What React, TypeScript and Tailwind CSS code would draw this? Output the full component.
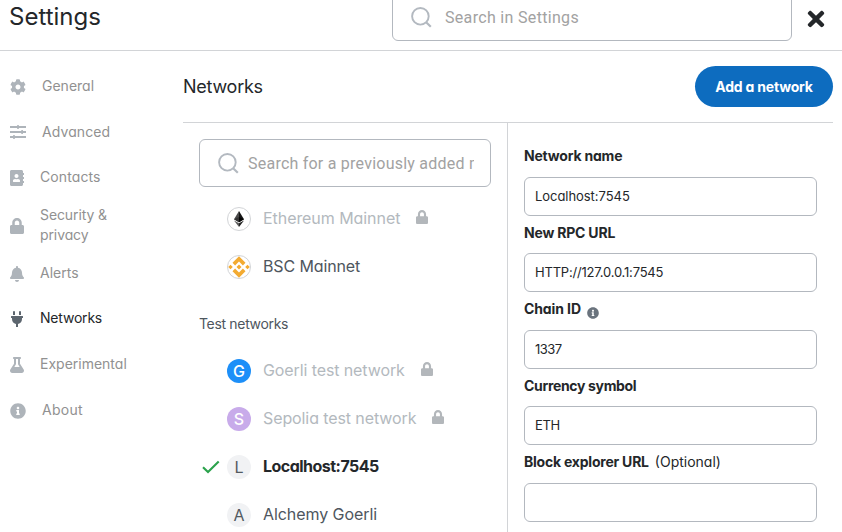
import type { ReactNode } from 'react';
import { FaAddressBook, FaBell, FaCog, FaFlask, FaInfoCircle, FaLock, FaPlug, FaTimes } from 'react-icons/fa';

function SearchIcon() {
  return (
    <svg viewBox="0 0 21 21" className="h-[21px] w-[21px] shrink-0 text-[#b3b9c0]" fill="none" stroke="currentColor" strokeWidth="1.9">
      <circle cx="9.4" cy="9.3" r="8.3" />
      <path d="M15.1 15.2L19.800 19.800" strokeWidth="2.2" />
    </svg>
  );
}

function SlidersIcon() {
  return (
    <svg viewBox="0 0 16 16" className="h-4 w-4" fill="currentColor">
      <path d="M0 1.100h16v1.900H0zM7.200 .1h1.600v4H7.200zM0 6.100h16v1.900H0zM11.300 5.100h1.600v4h-1.600zM0 11.100h16v1.900H0zM3.200 10.100h1.600v4H3.200z" />
    </svg>
  );
}

function EthereumIcon() {
  return (
    <svg viewBox="0 0 10 16" className="h-4 w-2.5">
      <path d="M5 0L0 8.2l5 3z" fill="#4a4a4a" />
      <path d="M5 0l5 8.2-5 3z" fill="#151515" />
      <path d="M5 6L0 8.2l5 3z" fill="#333" />
      <path d="M5 6l5 2.2-5 3z" fill="#050505" />
      <path d="M0 9.4L5 16v-3.7z" fill="#5a5a5a" />
      <path d="M10 9.4L5 16v-3.7z" fill="#222" />
    </svg>
  );
}

function BscIcon() {
  return (
    <svg viewBox="0 0 22 22" className="h-[22px] w-[22px]" fill="#f3ab32">
      <path d="M11 .3L4.5 6.8l2.6 2.6L11 5.500l3.900 3.900 2.600-2.600z" />
      <path d="M11 21.700L4.500 15.200l2.600-2.600L11 16.500l3.900-3.900 2.600 2.600z" />
      <path d="M11 8.500L13.500 11 11 13.500 8.500 11zM2.500 8.700L4.800 11l-2.300 2.300L.2 11zM19.500 8.700l2.300 2.300-2.300 2.300-2.300-2.300z" />
    </svg>
  );
}

function NavItem({ icon, label, height, active }: { icon: ReactNode; label: ReactNode; height: string; active?: boolean }) {
  return (
    <div className={`flex items-center gap-4 ${height} ${active ? 'text-[#24272a]' : 'text-[#919191]'}`}>
      <span className={`mt-[2px] flex shrink-0 justify-center ${active ? 'text-[#5d666f]' : 'text-[#aeb4ba]'}`}>{icon}</span>
      <span className="text-[14px] leading-5">{label}</span>
    </div>
  );
}

function NetworkRow({ icon, circle, name, nameClass, locked, selected }: { icon: ReactNode; circle: string; name: string; nameClass: string; locked?: boolean; selected?: boolean }) {
  return (
    <div className="flex h-12 items-center">
      <span className="flex w-7 shrink-0 pl-[3px]">
        {selected && (
          <svg viewBox="0 0 18 14" className="h-3.5 w-[18px]" fill="none" stroke="#2ba24c" strokeWidth="2.1">
            <path d="M1 7.200L6 12 16.700 1.500" />
          </svg>
        )}
      </span>
      <span className={`flex h-6 w-6 shrink-0 items-center justify-center rounded-full text-[16px] leading-none ${circle}`}>{icon}</span>
      <span className={`mb-0.5 ml-3 whitespace-nowrap text-[16px] leading-6 ${nameClass}`}>{name}</span>
      {locked && <FaLock className="mb-[4px] ml-4 h-3.5 w-3 text-[#b3b7bb]" preserveAspectRatio="none" />}
    </div>
  );
}

function Field({ label, labelClass, extra, value, valueClass }: { label: string; labelClass: string; extra?: ReactNode; value: string; valueClass?: string }) {
  return (
    <div className="h-[76.4px]">
      <div className="flex h-[20px] items-center text-[14px] leading-5">
        <span className={`font-bold ${labelClass}`}>{label}</span>
        {extra}
      </div>
      <div className={`mt-[10.6px] flex h-[39px] items-center rounded-md border border-[#b3b8bf] px-2.5 text-[13px] ${valueClass ?? ''}`}>{value}</div>
    </div>
  );
}

export default function App() {
  return (
    <div className="h-[532px] w-[842px] overflow-hidden bg-white font-[Inter,sans-serif] text-[#24272a] [font-feature-settings:'cv11']">
      <header className="flex h-[51px] items-start overflow-hidden border-b border-[#d2d4d7] pl-[9px]">
        <h1 className="w-[383px] pt-px text-[24px] leading-8">Settings</h1>
        <div className="-mt-[7px] flex h-12 w-[400px] items-center gap-[13px] rounded-md border border-[#b3b8bf] pl-[18px] font-[Roboto,sans-serif] text-[16px] text-[#a2a2a2]">
          <SearchIcon />
          <span className="pt-0.5 tracking-[0.32px]">Search in Settings</span>
        </div>
        <FaTimes className="ml-[14.5px] mt-[7px] h-6 w-[18px] text-[#24272a]" />
      </header>

      <div className="flex h-[481px]">
        <nav className="w-[183px] pl-[10px] pt-3">
          <NavItem icon={<FaCog className="h-4 w-4" />} label="General" height="h-[46px]" />
          <NavItem icon={<SlidersIcon />} label={<span className="tracking-[0.1px]">Advanced</span>} height="h-[46px]" />
          <NavItem icon={<FaAddressBook className="h-4 w-3.5" />} label={<span className="tracking-[0.1px]">Contacts</span>} height="h-[44px]" />
          <NavItem icon={<FaLock className="h-4 w-3.5" />} label={<span className="tracking-[-0.1px]">Security &amp;<br />privacy</span>} height="h-[52px]" />
          <NavItem icon={<FaBell className="h-4 w-3.5" />} label="Alerts" height="h-[44px]" />
          <NavItem icon={<FaPlug className="mx-px h-4 w-3" />} label={<span className="tracking-[-0.2px]">Networks</span>} height="h-[46px]" active />
          <NavItem icon={<FaFlask className="h-4 w-3.5" />} label="Experimental" height="h-[46px]" />
          <NavItem icon={<FaInfoCircle className="h-4 w-4" />} label={<span className="tracking-[0.25px]">About</span>} height="h-[46px]" />
        </nav>

        <main className="flex w-[650px] flex-col">
          <div className="flex h-[72px] shrink-0 items-center justify-between border-b border-[#d2d4d7]">
            <h2 className="text-[18px] leading-6 tracking-[-0.25px]">Networks</h2>
            <button className="h-[41px] w-[138px] rounded-full bg-[#0d6cbf] pb-px text-[14px] font-bold tracking-[-0.2px] text-white">Add a network</button>
          </div>

          <div className="flex flex-1">
            <section className="w-[325px] shrink-0 border-r border-[#d2d4d7] pl-4 pt-4">
              <div className="mb-2 flex h-12 w-[292px] items-center gap-[9px] rounded-md border border-[#b3b8bf] pl-[18px] pr-[16px] font-[Roboto,sans-serif] text-[16px] text-[#a2a2a2]">
                <SearchIcon />
                <span className="min-w-0 overflow-hidden whitespace-nowrap pt-0.5 tracking-[0.23px]">Search for a previously added network</span>
              </div>
              <NetworkRow icon={<EthereumIcon />} circle="border border-[#d2d4d7]" name="Ethereum Mainnet" nameClass="text-[#b3b9be] tracking-[-0.06px]" locked />
              <NetworkRow icon={<BscIcon />} circle="border border-[#d2d4d7]" name="BSC Mainnet" nameClass="text-[#4e565e] tracking-[-0.12px]" />
              <h3 className="mb-[13px] mt-[23px] text-[14px] leading-5 tracking-[-0.33px] text-[#4e565e]">Test networks</h3>
              <NetworkRow icon="G" circle="bg-[#1d8ff8] text-white font-medium" name="Goerli test network" nameClass="text-[#b3b9be] tracking-[-0.1px]" locked />
              <NetworkRow icon="S" circle="bg-[#c8abea] text-white font-medium" name="Sepolia test network" nameClass="text-[#b3b9be] tracking-[-0.1px]" locked />
              <NetworkRow icon="L" circle="bg-[#f1f2f4] text-[#535a61]" name="Localhost:7545" nameClass="font-bold tracking-[-0.52px]" selected />
              <NetworkRow icon="A" circle="bg-[#f1f2f4] text-[#535a61]" name="Alchemy Goerli" nameClass="text-[#4e565e] tracking-[-0.07px]" />
            </section>

            <section className="w-[325px] px-4 pt-[23.4px]">
              <Field label="Network name" labelClass="tracking-[-0.2px]" value="Localhost:7545" valueClass="tracking-[-0.05px]" />
              <Field label="New RPC URL" labelClass="tracking-[-0.2px]" value="HTTP://127.0.0.1:7545" valueClass="tracking-[-0.2px]" />
              <Field label="Chain ID" labelClass="tracking-[-0.1px]" extra={<FaInfoCircle className="ml-1.5 mt-[8px] h-3 w-3 text-[#6a737d]" />} value="1337" valueClass="tracking-[-0.5px]" />
              <Field label="Currency symbol" labelClass="tracking-[-0.33px]" value="ETH" valueClass="tracking-[-0.3px]" />
              <Field label="Block explorer URL" labelClass="tracking-[-0.22px]" extra={<span className="ml-1.5">(Optional)</span>} value="" />
            </section>
          </div>
        </main>
      </div>
    </div>
  );
}
